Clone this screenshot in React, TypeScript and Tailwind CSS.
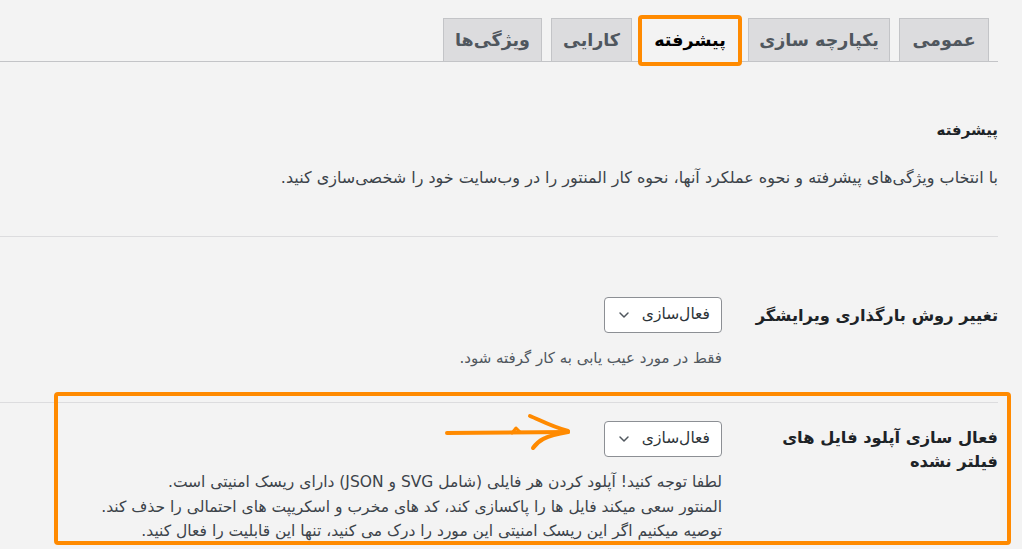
import React from 'react';
import { ChevronDown } from 'lucide-react';

const TABS = [
  { label: 'عمومی', w: 'w-[90px]' },
  { label: 'یکپارچه سازی', w: 'w-[142px]' },
  { label: 'پیشرفته', w: 'w-[98px]', active: true },
  { label: 'کارایی', w: 'w-[81px]' },
  { label: 'ویژگی‌ها', w: 'w-[99px]' },
];

const FakeSelect: React.FC = () => (
  <div className="flex h-[36px] w-[118px] items-center justify-between rounded-[4px] border border-[#8c8f94] bg-white pr-[11px] pl-[11px] text-[15.5px] text-[#2c3338]">
    <span>فعال‌سازی</span>
    <ChevronDown className="h-[16px] w-[16px] text-[#50575e]" strokeWidth={2.2} />
  </div>
);

const App: React.FC = () => {
  return (
    <div dir="rtl" className="relative min-h-screen overflow-hidden bg-[#f3f3f3] pr-[24px] font-['DejaVu_Sans',sans-serif] text-[#1d2327]">
      {/* Tabs */}
      <div className="flex gap-[9px] border-b border-[#c3c4c7] pt-[18px] pr-[9px]">
        {TABS.map((tab) => (
          <div
            key={tab.label}
            className={`relative -mb-px flex h-[44px] items-center justify-center border border-[#c3c4c7] text-[17.5px] font-bold ${tab.w} ${
              tab.active ? 'border-b-[#f3f3f3] bg-[#f3f3f3] text-black' : 'bg-[#dcdcde] text-[#50575e]'
            }`}
          >
            {tab.label}
            {tab.active && (
              <span className="pointer-events-none absolute -top-[4px] -right-[4px] -bottom-[5px] -left-[4px] rounded-[4px] border-4 border-[#ff8a00]" />
            )}
          </div>
        ))}
      </div>

      {/* Section header */}
      <h2 className="mt-[56px] text-[15px] font-bold leading-[24px]">پیشرفته</h2>
      <p className="mt-[26px] text-[16px] leading-[20px] text-[#3c434a]">
        با انتخاب ویژگی‌های پیشرفته و نحوه عملکرد آنها، نحوه کار المنتور را در وب‌سایت خود را شخصی‌سازی کنید.
      </p>
      <div className="mt-[48px] border-b border-[#dcdcde]" />

      {/* Row 1 */}
      <div className="flex border-b border-[#dcdcde] pt-[60px] pb-[34px]">
        <div className="w-[276px] shrink-0 pt-[7px] text-[16.3px] font-bold leading-[24px]">تغییر روش بارگذاری ویرایشگر</div>
        <div className="flex-1">
          <FakeSelect />
          <p className="mt-[15px] text-[15px] leading-[20px] text-[#50575e]">فقط در مورد عیب یابی به کار گرفته شود.</p>
        </div>
      </div>

      {/* Row 2 */}
      <div className="flex pt-[18px]">
        <div className="w-[276px] shrink-0 pt-[5px] text-[16.3px] font-bold leading-[24px]">
          فعال سازی آپلود فایل های
          <br />
          فیلتر نشده
        </div>
        <div className="flex-1">
          <FakeSelect />
          <div className="mt-[13px] text-[15.5px] leading-[24.5px] text-[#3c434a]">
            <p>لطفا توجه کنید! آپلود کردن هر فایلی (شامل SVG و JSON) دارای ریسک امنیتی است.</p>
            <p>المنتور سعی میکند فایل ها را پاکسازی کند، کد های مخرب و اسکریپت های احتمالی را حذف کند.</p>
            <p>توصیه میکنیم اگر این ریسک امنیتی این مورد را درک می کنید، تنها این قابلیت را فعال کنید.</p>
          </div>
        </div>
      </div>

      {/* Annotation: orange box */}
      <div className="pointer-events-none absolute top-[392px] left-[54px] h-[153px] w-[957px] rounded-[4px] border-4 border-[#ff8a00]" />

      {/* Annotation: hand-drawn arrow */}
      <svg className="pointer-events-none absolute top-[408px] left-[440px]" width="140" height="46" viewBox="0 0 140 46" fill="none">
        <path d="M7 25 L128 24" stroke="#ff8a00" strokeWidth="4" strokeLinecap="round" />
        <path d="M90 8 C100 12 110 18 128 23" stroke="#ff8a00" strokeWidth="4" strokeLinecap="round" />
        <path d="M93 40 C98 33 104 28 128 24" stroke="#ff8a00" strokeWidth="4" strokeLinecap="round" />
        <path d="M72 25 L76 20 L80 24" stroke="#ff8a00" strokeWidth="3" strokeLinecap="round" strokeLinejoin="round" />
      </svg>
    </div>
  );
};

export default App;
